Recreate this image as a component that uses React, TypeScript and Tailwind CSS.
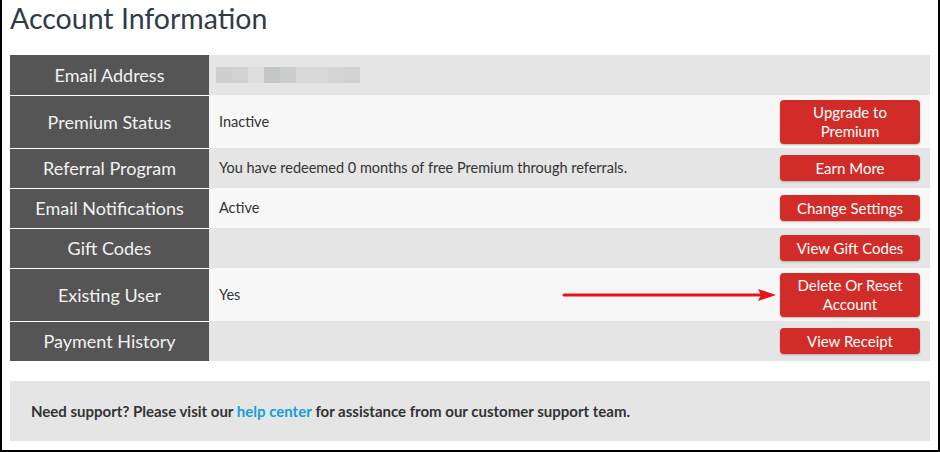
import React from 'react';

type Row = {
  label: string;
  value?: string;
  button?: string[];
  tall?: boolean;
  blur?: boolean;
};

const rows: Row[] = [
  { label: 'Email Address', blur: true },
  { label: 'Premium Status', value: 'Inactive', button: ['Upgrade to', 'Premium'], tall: true },
  { label: 'Referral Program', value: 'You have redeemed 0 months of free Premium through referrals.', button: ['Earn More'] },
  { label: 'Email Notifications', value: 'Active', button: ['Change Settings'] },
  { label: 'Gift Codes', button: ['View Gift Codes'] },
  { label: 'Existing User', value: 'Yes', button: ['Delete Or Reset', 'Account'], tall: true },
  { label: 'Payment History', button: ['View Receipt'] },
];

const blurBlocks = ['#cfcfcf', '#d3d3d5', '#dcdddc', '#c5c6c7', '#cbcdcb', '#d9dad9', '#d9dad9', '#d4d4d4', '#d3d3d5'];

export default function App() {
  return (
    <div
      className="relative h-[452px] w-[940px] border-x-2 border-b-2 border-black bg-white"
      style={{ fontFamily: 'Lato, "Open Sans", sans-serif' }}
    >
      <div className="px-[8px]">
        {/* Title */}
        <h1 className="h-[55px] pt-[1px] text-[28.5px] leading-[34px] text-[#2f3c48]">
          Account Information
        </h1>

        {/* Info table */}
        <div className="flex flex-col">
          {rows.map((row, i) => (
            <div
              key={row.label}
              className={`flex ${row.tall ? 'h-[53px]' : 'h-[40px]'} ${
                i % 2 === 0 ? 'bg-[#e5e5e5]' : 'bg-[#f7f7f7]'
              }`}
            >
              <div
                className={`flex w-[199px] shrink-0 items-center justify-center bg-[#555555] text-[18px] text-[#f2f2f2] ${
                  i > 0 ? 'border-t border-white' : ''
                }`}
              >
                {row.label}
              </div>
              <div className="flex flex-1 items-center justify-between pl-[10px] pr-[10px] text-[14.5px] text-[#333]">
                {row.blur ? (
                  <div className="ml-[-3px] flex">
                    {blurBlocks.map((c, j) => (
                      <div key={j} className="h-[16px] w-[16px]" style={{ backgroundColor: c }} />
                    ))}
                  </div>
                ) : (
                  <span>{row.value}</span>
                )}
                {row.button && (
                  <button
                    className={`flex w-[140px] flex-col items-center justify-center rounded-[4px] bg-[#d12c27] text-[15px] leading-[19px] text-white shadow-[0_1px_2px_rgba(0,0,0,0.25)] ${
                      row.button.length > 1 ? 'h-[44px]' : 'h-[26px]'
                    }`}
                  >
                    {row.button.map((t) => (
                      <span key={t}>{t}</span>
                    ))}
                  </button>
                )}
              </div>
            </div>
          ))}
        </div>

        {/* Support box */}
        <div className="mt-[20px] flex h-[60px] items-center bg-[#e5e5e5] pl-[21px] text-[15px] font-bold text-[#333]">
          Need support? Please visit our&nbsp;
          <a className="text-[#169fd9]">help center</a>
          &nbsp;for assistance from our customer support team.
        </div>
      </div>

      {/* Annotation arrow */}
      <svg className="absolute left-[560px] top-[287px]" width="216" height="16" viewBox="0 0 216 16">
        <line x1="2" y1="8" x2="200" y2="8" stroke="#e8141b" strokeWidth="3" strokeLinecap="round" />
        <polygon points="196,2 214,8 196,14 199,8" fill="#e8141b" />
      </svg>
    </div>
  );
}
